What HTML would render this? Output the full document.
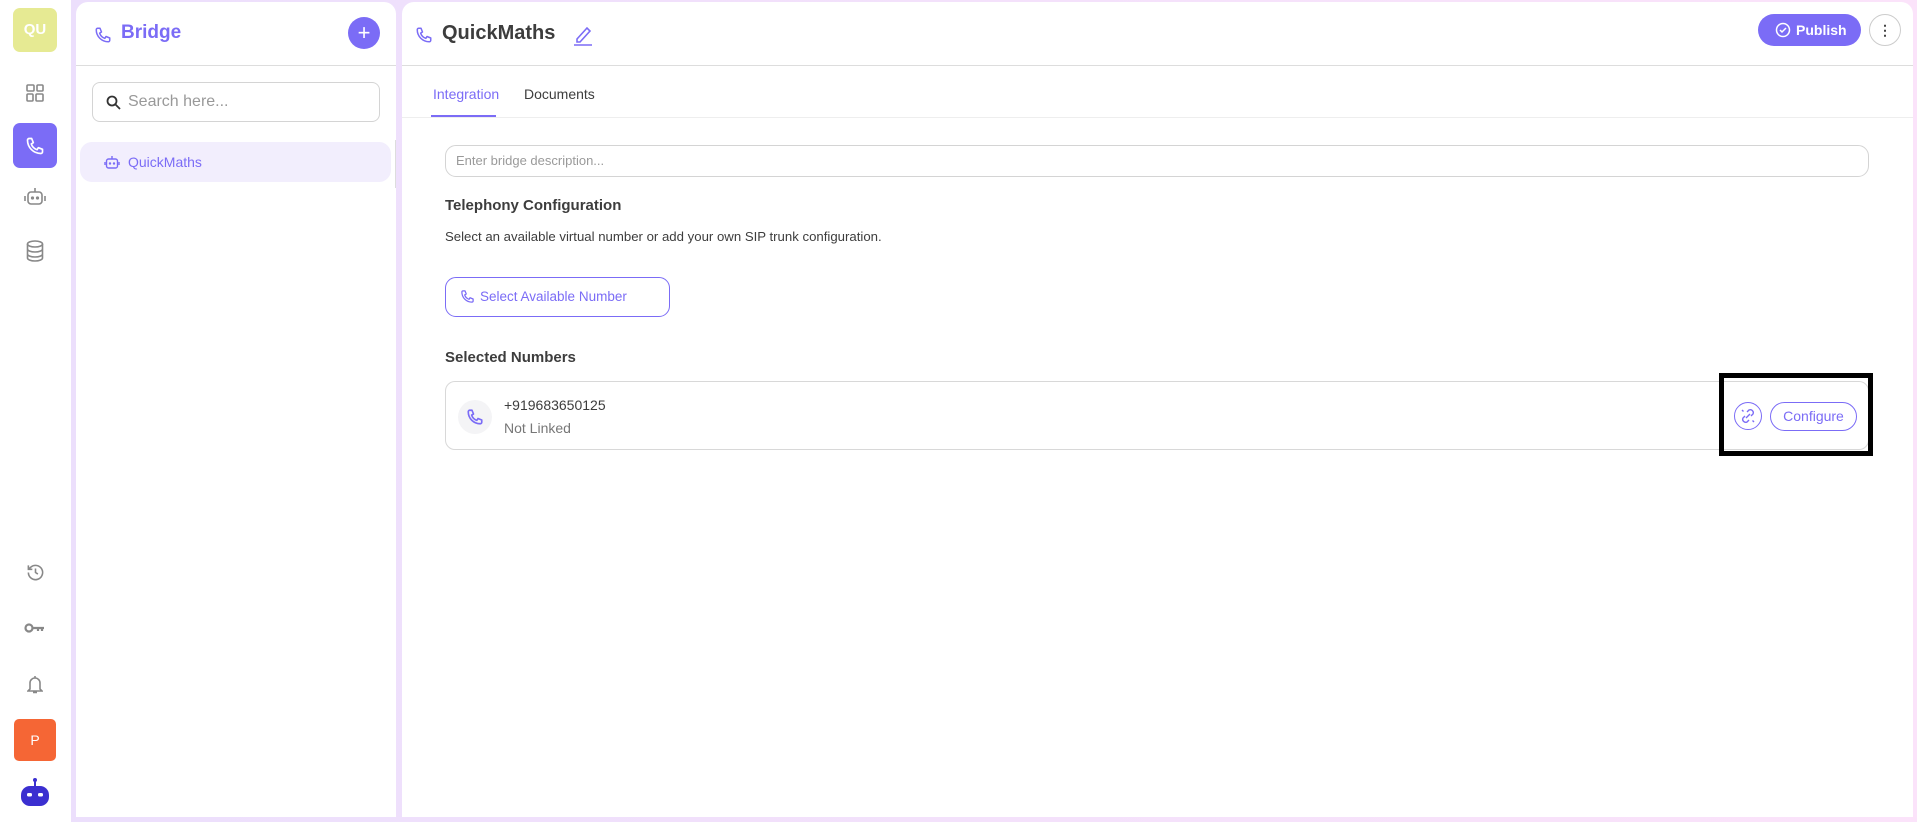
<!DOCTYPE html>
<html><head><meta charset="utf-8"><style>
*{box-sizing:border-box;margin:0;padding:0}
body{width:1917px;height:822px;overflow:hidden;font-family:"Liberation Sans",sans-serif;background:#fff;position:relative;color:#3a3a3a}
.bg{position:absolute;left:71px;top:0;width:1846px;height:822px;background:linear-gradient(90deg,#ecdffc,#fbe3fa)}
.abs{position:absolute}
.panel{position:absolute;background:#fff}
svg{display:block}
</style></head><body>
<div class="bg"></div>
<div class="abs" style="left:13px;top:8px;width:44px;height:44px;border-radius:7px;background:#e6ea93;color:#fff;font-weight:bold;font-size:15px;text-align:center;line-height:44px">QU</div>
<svg class="abs" style="left:26px;top:84px" width="18" height="18" viewBox="0 0 18 18" fill="none" stroke="#888" stroke-width="1.6"><rect x="1" y="1" width="7" height="6" rx="1"/><rect x="11" y="1" width="6" height="6" rx="1"/><rect x="1" y="10" width="6" height="7" rx="1"/><rect x="10" y="10" width="7" height="7" rx="1"/></svg>
<div class="abs" style="left:13px;top:123px;width:44px;height:45px;border-radius:7px;background:#7b6cf6"></div>
<svg class="abs" style="left:25px;top:136px" width="20" height="20" viewBox="0 0 24 24" fill="none" stroke="#fff" stroke-width="2" stroke-linecap="round" stroke-linejoin="round"><path d="M5 3h3l2 5-2.5 1.5a11 11 0 0 0 7 7L16 14l5 2v3a2 2 0 0 1-2 2A16 16 0 0 1 3 5a2 2 0 0 1 2-2"/></svg>
<svg class="abs" style="left:24px;top:186px" width="22" height="22" viewBox="0 0 22 22" fill="none" stroke="#888" stroke-width="1.6"><rect x="4" y="6" width="14" height="12" rx="3"/><path d="M11 6V2M1 10v5M21 10v5"/><circle cx="8.5" cy="12" r=".8" fill="#888"/><circle cx="13.5" cy="12" r=".8" fill="#888"/></svg>
<svg class="abs" style="left:26px;top:240px" width="18" height="22" viewBox="0 0 18 22" fill="none" stroke="#888" stroke-width="1.6"><ellipse cx="9" cy="4" rx="7.5" ry="3"/><path d="M1.5 4v14c0 1.7 3.4 3 7.5 3s7.5-1.3 7.5-3V4M1.5 9c0 1.7 3.4 3 7.5 3s7.5-1.3 7.5-3M1.5 14c0 1.7 3.4 3 7.5 3s7.5-1.3 7.5-3"/></svg>
<svg class="abs" style="left:26px;top:563px" width="19" height="19" viewBox="0 0 24 24" fill="none" stroke="#888" stroke-width="2"><path d="M3 12a9 9 0 1 0 3-6.7L3 8M3 3v5h5M12 7v5l3 2"/></svg>
<svg class="abs" style="left:24px;top:621px" width="22" height="14" viewBox="0 0 22 14" fill="none" stroke="#888" stroke-width="2.2"><circle cx="5" cy="7" r="3.5"/><path d="M8.5 7H20M14 7v3M18 7v3"/></svg>
<svg class="abs" style="left:27px;top:675px" width="16" height="19" viewBox="0 0 16 19" fill="none" stroke="#888" stroke-width="1.6"><path d="M8 1v2M3 14V8a5 5 0 0 1 10 0v6l2 2H1zM6 17.5h4"/></svg>
<div class="abs" style="left:14px;top:719px;width:42px;height:42px;border-radius:5px;background:#f56635;color:#fff;font-size:14px;text-align:center;line-height:42px">P</div>
<svg class="abs" style="left:19px;top:777px" width="32" height="32" viewBox="0 0 32 32"><circle cx="16" cy="3" r="2" fill="#3b2fd0"/><rect x="15" y="3" width="2" height="6" fill="#3b2fd0"/><rect x="2" y="9" width="28" height="20" rx="9" fill="#3b2fd0"/><rect x="8" y="16" width="5" height="3.5" rx="1.5" fill="#fff"/><rect x="19" y="16" width="5" height="3.5" rx="1.5" fill="#fff"/></svg>

<div class="panel" style="left:76px;top:2px;width:320px;height:815px;border-radius:12px 12px 0 0">
  <div class="abs" style="left:0;top:63px;width:320px;height:1px;background:#ddd"></div>
  <svg class="abs" style="left:18px;top:24px" width="18" height="18" viewBox="0 0 24 24" fill="none" stroke="#7b6cf6" stroke-width="2" stroke-linecap="round" stroke-linejoin="round"><path d="M5 3h3l2 5-2.5 1.5a11 11 0 0 0 7 7L16 14l5 2v3a2 2 0 0 1-2 2A16 16 0 0 1 3 5a2 2 0 0 1 2-2"/></svg>
  <div class="abs" style="left:45px;top:20px;font-size:19px;font-weight:bold;color:#7b6cf6">Bridge</div>
  <div class="abs" style="left:272px;top:15px;width:32px;height:32px;border-radius:50%;background:#7b6cf6;color:#fff;text-align:center;line-height:31px;font-size:22px">+</div>
  <div class="abs" style="left:16px;top:80px;width:288px;height:40px;border:1px solid #d4d4d4;border-radius:8px"></div>
  <svg class="abs" style="left:30px;top:93px" width="15" height="15" viewBox="0 0 15 15" fill="none" stroke="#333" stroke-width="1.8"><circle cx="6" cy="6" r="4.5"/><path d="M9.5 9.5 14 14"/></svg>
  <div class="abs" style="left:52px;top:91px;font-size:16px;color:#999">Search here...</div>
  <div class="abs" style="left:4px;top:140px;width:311px;height:40px;border-radius:12px;background:#f2eefd"></div>
  <svg class="abs" style="left:28px;top:153px" width="16" height="14" viewBox="0 0 16 14" fill="none" stroke="#7b6cf6" stroke-width="1.4"><rect x="2.5" y="4" width="11" height="9" rx="2"/><path d="M8 4V1M1 7v3M15 7v3"/><circle cx="6" cy="8.5" r=".5" fill="#7b6cf6"/><circle cx="10" cy="8.5" r=".5" fill="#7b6cf6"/></svg>
  <div class="abs" style="left:52px;top:152px;font-size:14px;color:#7b6cf6">QuickMaths</div>
  <div class="abs" style="left:319px;top:138px;width:1px;height:48px;background:#ddd"></div>
</div>

<div class="panel" style="left:402px;top:2px;width:1511px;height:815px;border-radius:12px 12px 0 0">
  <div class="abs" style="left:0;top:63px;width:1511px;height:1px;background:#ddd"></div>
  <div class="abs" style="left:0;top:115px;width:1511px;height:1px;background:#eee"></div>
  <svg class="abs" style="left:13px;top:24px" width="18" height="18" viewBox="0 0 24 24" fill="none" stroke="#7b6cf6" stroke-width="2" stroke-linecap="round" stroke-linejoin="round"><path d="M5 3h3l2 5-2.5 1.5a11 11 0 0 0 7 7L16 14l5 2v3a2 2 0 0 1-2 2A16 16 0 0 1 3 5a2 2 0 0 1 2-2"/></svg>
  <div class="abs" style="left:40px;top:20px;font-size:20px;font-weight:bold;color:#3d3d3d">QuickMaths</div>
  <svg class="abs" style="left:171px;top:22px" width="20" height="22" viewBox="0 0 20 22" fill="none" stroke="#7b6cf6" stroke-width="1.6"><path d="M4 15 14 4l3 3L7 18H4z"/><path d="M1 21h18"/></svg>
  <div class="abs" style="left:1356px;top:12px;width:103px;height:32px;border-radius:16px;background:#7b6cf6;color:#fff;font-weight:bold;font-size:14px;line-height:32px;padding-left:38px">Publish</div>
  <svg class="abs" style="left:1373px;top:20px" width="16" height="16" viewBox="0 0 16 16" fill="none" stroke="#fff" stroke-width="1.5"><circle cx="8" cy="8" r="6.5"/><path d="m5 8 2 2 4-4"/></svg>
  <div class="abs" style="left:1467px;top:12px;width:32px;height:32px;border-radius:50%;border:1px solid #ccc;text-align:center;line-height:30px;font-size:14px;font-weight:bold;color:#444">⋮</div>
  <div class="abs" style="left:31px;top:84px;font-size:14px;color:#7b6cf6">Integration</div>
  <div class="abs" style="left:29px;top:113px;width:65px;height:2px;background:#7b6cf6"></div>
  <div class="abs" style="left:122px;top:84px;font-size:14px;color:#3d3d3d">Documents</div>
  <div class="abs" style="left:43px;top:143px;width:1424px;height:32px;border:1px solid #d4d4d4;border-radius:11px;padding-left:10px;line-height:30px;font-size:13px;color:#9a9a9a">Enter bridge description...</div>
  <div class="abs" style="left:43px;top:195px;font-size:15px;font-weight:bold;color:#3d3d3d">Telephony Configuration</div>
  <div class="abs" style="left:43px;top:227px;font-size:13.2px;color:#3d3d3d">Select an available virtual number or add your own SIP trunk configuration.</div>
  <div class="abs" style="left:43px;top:275px;width:225px;height:40px;border:1.5px solid #7b6cf6;border-radius:11px"></div>
  <svg class="abs" style="left:58px;top:287px" width="15" height="15" viewBox="0 0 24 24" fill="none" stroke="#7b6cf6" stroke-width="2" stroke-linecap="round" stroke-linejoin="round"><path d="M5 3h3l2 5-2.5 1.5a11 11 0 0 0 7 7L16 14l5 2v3a2 2 0 0 1-2 2A16 16 0 0 1 3 5a2 2 0 0 1 2-2"/></svg>
  <div class="abs" style="left:78px;top:287px;font-size:13.5px;color:#7b6cf6">Select Available Number</div>
  <div class="abs" style="left:43px;top:347px;font-size:15px;font-weight:bold;color:#3d3d3d">Selected Numbers</div>
  <div class="abs" style="left:43px;top:379px;width:1424px;height:69px;border:1px solid #d8d8d8;border-radius:10px"></div>
  <div class="abs" style="left:56px;top:398px;width:34px;height:34px;border-radius:50%;background:#f4f4f6"></div>
  <svg class="abs" style="left:64px;top:406px" width="18" height="18" viewBox="0 0 24 24" fill="none" stroke="#7b6cf6" stroke-width="2.2" stroke-linecap="round" stroke-linejoin="round"><path d="M5 3h3l2 5-2.5 1.5a11 11 0 0 0 7 7L16 14l5 2v3a2 2 0 0 1-2 2A16 16 0 0 1 3 5a2 2 0 0 1 2-2"/></svg>
  <div class="abs" style="left:102px;top:395px;font-size:14px;color:#3d3d3d">+919683650125</div>
  <div class="abs" style="left:102px;top:418px;font-size:14px;color:#777">Not Linked</div>
  <div class="abs" style="left:1317px;top:371px;width:154px;height:83px;border:5px solid #000"></div>
  <div class="abs" style="left:1332px;top:400px;width:28px;height:28px;border-radius:50%;border:1.3px solid #7b6cf6"></div>
  <svg class="abs" style="left:1338px;top:406px" width="16" height="16" viewBox="0 0 16 16" fill="none" stroke="#7b6cf6" stroke-width="1.4"><path d="M7 4l2-2a3 3 0 0 1 4 4l-2 2M9 12l-2 2a3 3 0 0 1-4-4l2-2M6 10l4-4M2 2l1.5 1.5M14 14l-1.5-1.5"/></svg>
  <div class="abs" style="left:1368px;top:400px;width:87px;height:29px;border:1.3px solid #7b6cf6;border-radius:15px;text-align:center;line-height:27px;font-size:14px;color:#7b6cf6">Configure</div>
</div>
</body></html>
